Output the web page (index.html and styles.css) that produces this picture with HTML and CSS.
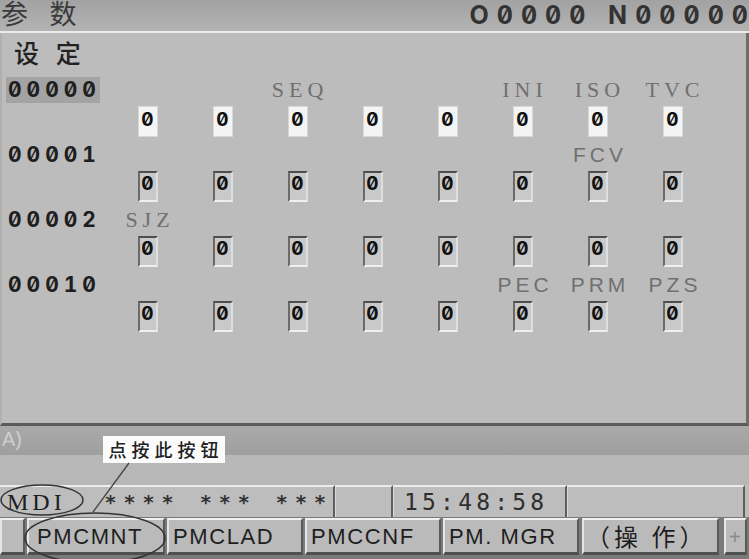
FILE: index.html
```html
<!DOCTYPE html>
<html lang="zh-CN">
<head>
    <meta charset="UTF-8">
    <title>参数 设定</title>
    <link rel="stylesheet" href="styles.css">
</head>
<body>
    <div class="screen">
        <!-- Title bar -->
        <div class="titlebar">
            <span class="title">参 数</span>
            <span class="prog">O0000 N0000<span class="last">0</span></span>
        </div>

        <!-- Parameter panel -->
        <div class="panel">
            <div class="heading">设 定</div>

            <div class="param">
                <div class="param-head">
                    <span class="num selected">00000</span>
                    <span class="tag c3">SEQ</span>
                    <span class="tag c6">INI</span>
                    <span class="tag c7">ISO</span>
                    <span class="tag c8">TVC</span>
                </div>
                <div class="param-bits">
                    <span class="bit active">0</span><span class="bit active">0</span><span class="bit active">0</span><span class="bit active">0</span>
                    <span class="bit active">0</span><span class="bit active">0</span><span class="bit active">0</span><span class="bit active">0</span>
                </div>
            </div>

            <div class="param">
                <div class="param-head">
                    <span class="num">00001</span>
                    <span class="tag sans c7">FCV</span>
                </div>
                <div class="param-bits">
                    <span class="bit">0</span><span class="bit">0</span><span class="bit">0</span><span class="bit">0</span>
                    <span class="bit">0</span><span class="bit">0</span><span class="bit">0</span><span class="bit">0</span>
                </div>
            </div>

            <div class="param">
                <div class="param-head">
                    <span class="num">00002</span>
                    <span class="tag c1">SJZ</span>
                </div>
                <div class="param-bits">
                    <span class="bit">0</span><span class="bit">0</span><span class="bit">0</span><span class="bit">0</span>
                    <span class="bit">0</span><span class="bit">0</span><span class="bit">0</span><span class="bit">0</span>
                </div>
            </div>

            <div class="param">
                <div class="param-head">
                    <span class="num">00010</span>
                    <span class="tag sans c6">PEC</span>
                    <span class="tag sans c7">PRM</span>
                    <span class="tag sans c8">PZS</span>
                </div>
                <div class="param-bits">
                    <span class="bit">0</span><span class="bit">0</span><span class="bit">0</span><span class="bit">0</span>
                    <span class="bit">0</span><span class="bit">0</span><span class="bit">0</span><span class="bit">0</span>
                </div>
            </div>
        </div>

        <!-- Key-in line -->
        <div class="input-line">A)</div>
        <div class="spacer"></div>

        <!-- Status line -->
        <div class="status">
            <div class="cell cell-mode">
                <span class="mode">MDI</span>
                <span class="stars">**** *** ***</span>
            </div>
            <div class="cell cell-blank"></div>
            <div class="cell cell-time">15:48:58</div>
            <div class="cell cell-rest"></div>
        </div>

        <!-- Soft keys -->
        <div class="softkeys">
            <div class="key key-edge"></div>
            <div class="key key-wide">PMCMNT</div>
            <div class="key">PMCLAD</div>
            <div class="key">PMCCNF</div>
            <div class="key">PM. MGR</div>
            <div class="key key-cn">（操 作）</div>
            <div class="key key-plus">+</div>
        </div>
    </div>

    <!-- Annotation overlay -->
    <div class="callout">点按此按钮</div>
    <svg class="marks" width="749" height="559" viewBox="0 0 749 559">
        <ellipse cx="42" cy="500" rx="41" ry="15" fill="none" stroke="#333" stroke-width="1.5"/>
        <ellipse cx="95" cy="538" rx="70" ry="25" fill="none" stroke="#333" stroke-width="1.5"/>
        <line x1="129" y1="463" x2="93" y2="512" stroke="#444" stroke-width="1.3"/>
    </svg>
</body>
</html>
```

FILE: styles.css
```css
body {
    margin: 0;
    width: 749px;
    height: 559px;
    overflow: hidden;
    position: relative;
    background-color: #b9b9b9;
    font-family: "DejaVu Sans Mono", monospace;
    color: #222;
}
.screen {
    display: flex;
    flex-direction: column;
    height: 559px;
}
.titlebar {
    height: 31px;
    display: flex;
    justify-content: space-between;
    align-items: center;
    background: linear-gradient(#a2a2a2, #b3b3b3);
    border-bottom: 2px solid #ececec;
}
.title {
    padding-left: 1px;
    font-family: "Liberation Sans", "Noto Sans CJK SC", sans-serif;
    font-size: 27px;
    line-height: 31px;
    letter-spacing: 7px;
    color: #3a3a3a;
}
.prog {
    font-family: Inter, sans-serif;
    font-variant-numeric: tabular-nums slashed-zero;
    font-weight: bold;
    font-size: 25px;
    line-height: 31px;
    letter-spacing: 8px;
    color: #333;
    padding-right: 1px;
}
.prog .last {
    letter-spacing: 0;
}
.panel {
    height: 393px;
    box-sizing: border-box;
    background-color: #bcbcbc;
    border-right: 3px solid #6d6d6d;
    border-bottom: 3px solid #5a5a5a;
    border-left: 2px solid #b0b0b0;
}
.heading {
    height: 44px;
    line-height: 38px;
    padding-left: 12px;
    font-family: "Noto Sans CJK SC", sans-serif;
    font-size: 25px;
    font-weight: 500;
    letter-spacing: 5.5px;
    color: #222;
}
.param-head,
.param-bits {
    display: grid;
    grid-template-columns: 108px repeat(8, 75px);
}
.param-head {
    height: 26px;
    align-items: center;
}
.param-bits {
    height: 39px;
    justify-items: center;
    align-items: start;
}
.num {
    grid-column: 1;
    grid-row: 1;
    margin-left: 4px;
    width: 94px;
    height: 26px;
    line-height: 26px;
    padding-left: 2px;
    box-sizing: border-box;
    font-family: Inter, sans-serif;
    font-variant-numeric: tabular-nums slashed-zero;
    font-weight: bold;
    font-size: 21px;
    letter-spacing: 5px;
    color: #1e1e1e;
}
.num.selected {
    background-color: #a3a3a3;
}
.tag {
    grid-row: 1;
    justify-self: center;
    padding-left: 5px;
    font-family: "Liberation Serif", serif;
    font-size: 22px;
    letter-spacing: 5px;
    color: #707070;
}
.tag.sans {
    font-family: "Liberation Sans", sans-serif;
    font-size: 21px;
    letter-spacing: 4px;
}
.c1 { grid-column: 2; }
.c3 { grid-column: 4; }
.c6 { grid-column: 7; }
.c7 { grid-column: 8; }
.c8 { grid-column: 9; }
.param-bits .bit:first-child {
    grid-column: 2;
}
.bit {
    margin-top: 3px;
    width: 20px;
    height: 31px;
    box-sizing: border-box;
    background-color: #c9c9c9;
    border-top: 2px solid #4d4d4d;
    border-left: 2px solid #6a6a6a;
    border-bottom: 2px solid #efefef;
    border-right: 2px solid #dedede;
    font-family: Inter, sans-serif;
    font-variant-numeric: tabular-nums slashed-zero;
    font-weight: bold;
    font-size: 19px;
    line-height: 22px;
    text-align: center;
    color: #111;
}
.bit.active {
    background-color: #f4f4f4;
    border: 1px solid #d8d8d8;
    line-height: 26px;
}
.input-line {
    height: 29px;
    line-height: 26px;
    padding-left: 2px;
    background: linear-gradient(#a9a9a9, #9f9f9f);
    font-family: "Liberation Sans", sans-serif;
    font-size: 20px;
    color: #cfcfcf;
}
.spacer {
    height: 30px;
    background-color: #b7b7b7;
}
.status {
    height: 32px;
    display: flex;
    background-color: #bdbdbd;
}
.cell {
    box-sizing: border-box;
    border-top: 2px solid #ececec;
    border-right: 2px solid #5e5e5e;
    border-left: 1px solid #dcdcdc;
    display: flex;
    align-items: center;
}
.cell-mode {
    width: 335px;
    border-left: none;
}
.mode {
    font-family: "Liberation Serif", serif;
    font-size: 24px;
    letter-spacing: 4px;
    padding-left: 7px;
    width: 98px;
    color: #1e1e1e;
}
.stars {
    font-weight: bold;
    font-size: 20px;
    letter-spacing: 7px;
    white-space: pre;
    color: #333;
}
.cell-blank {
    width: 58px;
}
.cell-time {
    width: 174px;
    padding-left: 10px;
    font-size: 23px;
    letter-spacing: 4.2px;
    color: #2e2e2e;
}
.cell-rest {
    flex: 1;
    margin-right: 4px;
}
.softkeys {
    height: 42px;
    display: flex;
    gap: 2px;
    padding-top: 1px;
    box-sizing: border-box;
    background-color: #7a7a7a;
}
.key {
    width: 136px;
    height: 37px;
    box-sizing: border-box;
    background-color: #bababa;
    border-top: 2px solid #f0f0f0;
    border-left: 2px solid #e6e6e6;
    border-bottom: 3px solid #4f4f4f;
    border-right: 2px solid #5a5a5a;
    padding-left: 4px;
    font-family: "Liberation Sans", sans-serif;
    font-size: 22px;
    letter-spacing: 1.6px;
    line-height: 34px;
    color: #1e1e1e;
    white-space: pre;
}
.key-edge {
    width: 25px;
}
.key-wide {
    width: 138px;
    padding-left: 8px;
}
.key-cn {
    width: 137px;
    margin-left: 1px;
    padding-left: 2px;
    font-family: "Noto Sans CJK SC", sans-serif;
    font-size: 24px;
    letter-spacing: 4px;
    line-height: 32px;
}
.key-plus {
    width: 23px;
    margin-left: 3px;
    padding-left: 3px;
    color: #888;
    font-size: 20px;
}
.callout {
    position: absolute;
    left: 103px;
    top: 436px;
    width: 122px;
    height: 27px;
    box-sizing: border-box;
    background-color: #fbfbfb;
    font-family: "Noto Sans CJK SC", sans-serif;
    font-size: 18px;
    font-weight: 500;
    line-height: 27px;
    letter-spacing: 5px;
    text-align: center;
    padding-left: 4px;
    color: #222;
}
.marks {
    position: absolute;
    left: 0;
    top: 0;
    pointer-events: none;
}
```
